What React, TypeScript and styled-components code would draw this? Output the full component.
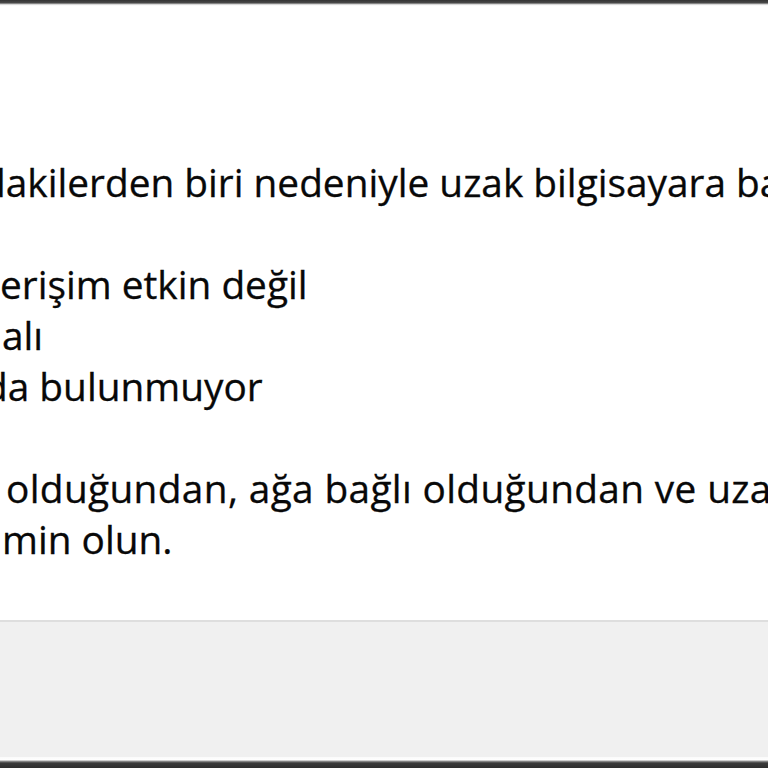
import React from "react";
import styled, { createGlobalStyle } from "styled-components";

const Global = createGlobalStyle`
  html, body { margin: 0; padding: 0; background: #ffffff; }
  body { overflow: hidden; }
`;

const Page = styled.div`
  width: 768px;
  height: 768px;
  display: flex;
  flex-direction: column;
  overflow: hidden;
  background: #ffffff;
`;

const TopEdge = styled.div`
  height: 6px;
  flex: none;
  background: linear-gradient(to bottom, #333333 0px, #4a4a4a 3px, #bdbdbd 4px, #f4f4f4 5px, #ffffff 6px);
`;

const Content = styled.div`
  flex: 1;
  background: #ffffff;
  padding-top: 151px;
  overflow: hidden;
`;

const Paragraph = styled.div`
  margin: 0 0 51px 0;
`;

const Line = styled.div<{ $shift: number; $spread?: number }>`
  font-family: "Open Sans", "Noto Sans", sans-serif;
  font-size: 38.8px;
  line-height: 51px;
  color: #080808;
  white-space: nowrap;
  margin-left: ${(p) => p.$shift}px;
  letter-spacing: ${(p) => p.$spread ?? 0}px;
  -webkit-text-stroke: 0.3px #080808;
`;

const Footer = styled.div`
  flex: none;
  height: 135px;
  background: #f0f0f0;
  border-top: 2px solid #dedede;
`;

const BottomEdge = styled.div`
  flex: none;
  height: 11px;
  background: linear-gradient(to bottom, #fafafa 0px, #ffffff 3px, #9a9a9a 4px, #3a3a3a 6px, #2e2e2e 11px);
`;

export default function App() {
  return (
    <>
      <Global />
      <Page>
        <TopEdge />
        <Content>
          <Paragraph>
            <Line $shift={-18}>dakilerden biri nedeniyle uzak bilgisayara ba</Line>
          </Paragraph>
          <Paragraph>
            <Line $shift={0}>erişim etkin değil</Line>
            <Line $shift={2}>alı</Line>
            <Line $shift={-16}>da bulunmuyor</Line>
          </Paragraph>
          <Paragraph>
            <Line $shift={6} $spread={0.35}>olduğundan, ağa bağlı olduğundan ve uza</Line>
            <Line $shift={2}>min olun.</Line>
          </Paragraph>
        </Content>
        <Footer />
        <BottomEdge />
      </Page>
    </>
  );
}
